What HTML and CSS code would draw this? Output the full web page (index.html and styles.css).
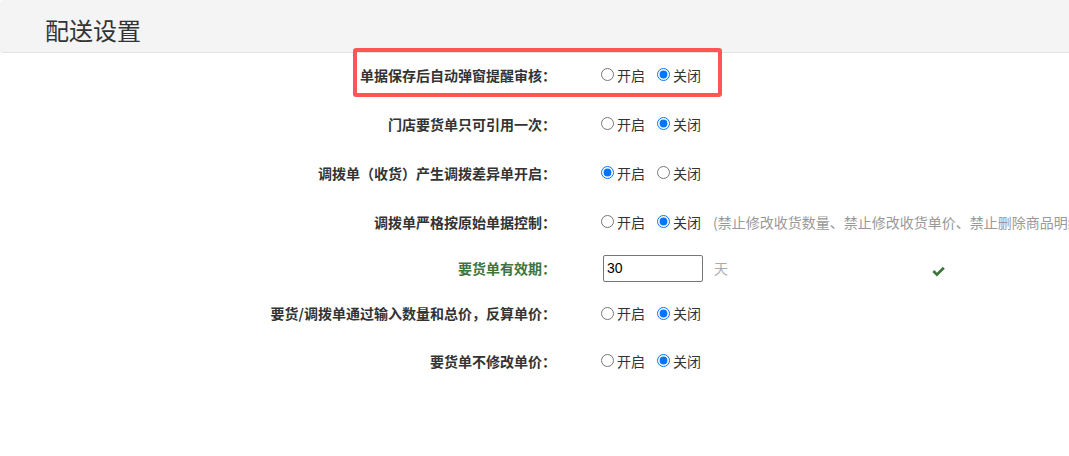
FILE: index.html
```html
<!DOCTYPE html>
<html lang="zh-CN">
<head>
<meta charset="utf-8">
<title>配送设置</title>
<link rel="stylesheet" href="styles.css">
</head>
<body>
<div class="page">
  <header class="page-header">
    <h1 class="page-title">配送设置</h1>
  </header>
  <form class="settings">
    <div class="row">
      <label class="row-label">单据保存后自动弹窗提醒审核：</label>
      <div class="row-ctrl">
        <label class="opt"><input type="radio" name="r1">开启</label>
        <label class="opt"><input type="radio" name="r1" checked>关闭</label>
      </div>
    </div>
    <div class="row">
      <label class="row-label">门店要货单只可引用一次：</label>
      <div class="row-ctrl">
        <label class="opt"><input type="radio" name="r2">开启</label>
        <label class="opt"><input type="radio" name="r2" checked>关闭</label>
      </div>
    </div>
    <div class="row">
      <label class="row-label">调拨单（收货）产生调拨差异单开启：</label>
      <div class="row-ctrl">
        <label class="opt"><input type="radio" name="r3" checked>开启</label>
        <label class="opt"><input type="radio" name="r3">关闭</label>
      </div>
    </div>
    <div class="row">
      <label class="row-label">调拨单严格按原始单据控制：</label>
      <div class="row-ctrl">
        <label class="opt"><input type="radio" name="r4">开启</label>
        <label class="opt"><input type="radio" name="r4" checked>关闭</label>
        <span class="note">(禁止修改收货数量、禁止修改收货单价、禁止删除商品明细)</span>
      </div>
    </div>
    <div class="row row-short">
      <label class="row-label label-success">要货单有效期：</label>
      <div class="row-ctrl">
        <input class="num-input" type="text" value="30">
        <span class="unit">天</span>
        <svg class="ok-icon" viewBox="0 0 16 16" width="15" height="15" aria-hidden="true">
          <path d="M1.5 8.6 L3.6 6.5 L6.3 9.2 L12.6 2.9 L14.7 5 L6.3 13.4 Z" fill="#3c763d"/>
        </svg>
      </div>
    </div>
    <div class="row row-mid">
      <label class="row-label">要货/调拨单通过输入数量和总价，反算单价：</label>
      <div class="row-ctrl">
        <label class="opt"><input type="radio" name="r6">开启</label>
        <label class="opt"><input type="radio" name="r6" checked>关闭</label>
      </div>
    </div>
    <div class="row">
      <label class="row-label">要货单不修改单价：</label>
      <div class="row-ctrl">
        <label class="opt"><input type="radio" name="r7">开启</label>
        <label class="opt"><input type="radio" name="r7" checked>关闭</label>
      </div>
    </div>
  </form>
  <div class="highlight"></div>
</div>
</body>
</html>
```
FILE: styles.css
```css
html, body {
  margin: 0;
  padding: 0;
  background: #fff;
  overflow: hidden;
}
body {
  font-family: "Noto Sans CJK SC", "Liberation Sans", sans-serif;
  font-size: 14px;
  color: #333;
}
.page {
  position: relative;
  width: 1069px;
  height: 456px;
  overflow: hidden;
}
.page-header {
  height: 53px;
  box-sizing: border-box;
  background: #f4f4f4;
  border-bottom: 1px solid #e2e2e2;
  border-radius: 4px 0 0 4px;
  display: flex;
  align-items: center;
  padding-left: 45px;
  padding-top: 7px;
}
.page-title {
  margin: 0;
  font-size: 24px;
  font-weight: normal;
  color: #333;
  line-height: 1;
}
.settings {
  display: flex;
  flex-direction: column;
  margin-top: -3px;
}
.row {
  display: grid;
  grid-template-columns: 556px 1fr;
  column-gap: 40px;
  align-items: center;
  height: 49px;
  white-space: nowrap;
}
.row-short { height: 44px; }
.row-mid { height: 46px; }
.row-label {
  text-align: right;
  font-weight: bold;
  color: #333;
}
.label-success { color: #3c763d; }
.row-ctrl {
  display: flex;
  align-items: center;
}
.opt {
  display: inline-flex;
  align-items: center;
  margin-right: 7px;
  color: #333;
}
.opt input {
  margin: 0 3px 0 5px;
  width: 13px;
  height: 13px;
}
.note {
  margin-left: 5px;
  color: #999;
}
.num-input {
  width: 100px;
  height: 27px;
  box-sizing: border-box;
  margin: 0 0 0 7px;
  padding: 1px 3px;
  border: 1px solid #767676;
  border-radius: 2px;
  font-family: "Liberation Sans", Arial, sans-serif;
  font-size: 14px;
  color: #000;
}
.unit {
  margin-left: 11px;
  color: #aaa;
}
.ok-icon {
  margin-left: 203px;
  margin-top: 6px;
}
.highlight {
  position: absolute;
  left: 353px;
  top: 48px;
  width: 369px;
  height: 49px;
  box-sizing: border-box;
  border: 4px solid #fe5656;
  border-radius: 3px;
  pointer-events: none;
}
```
